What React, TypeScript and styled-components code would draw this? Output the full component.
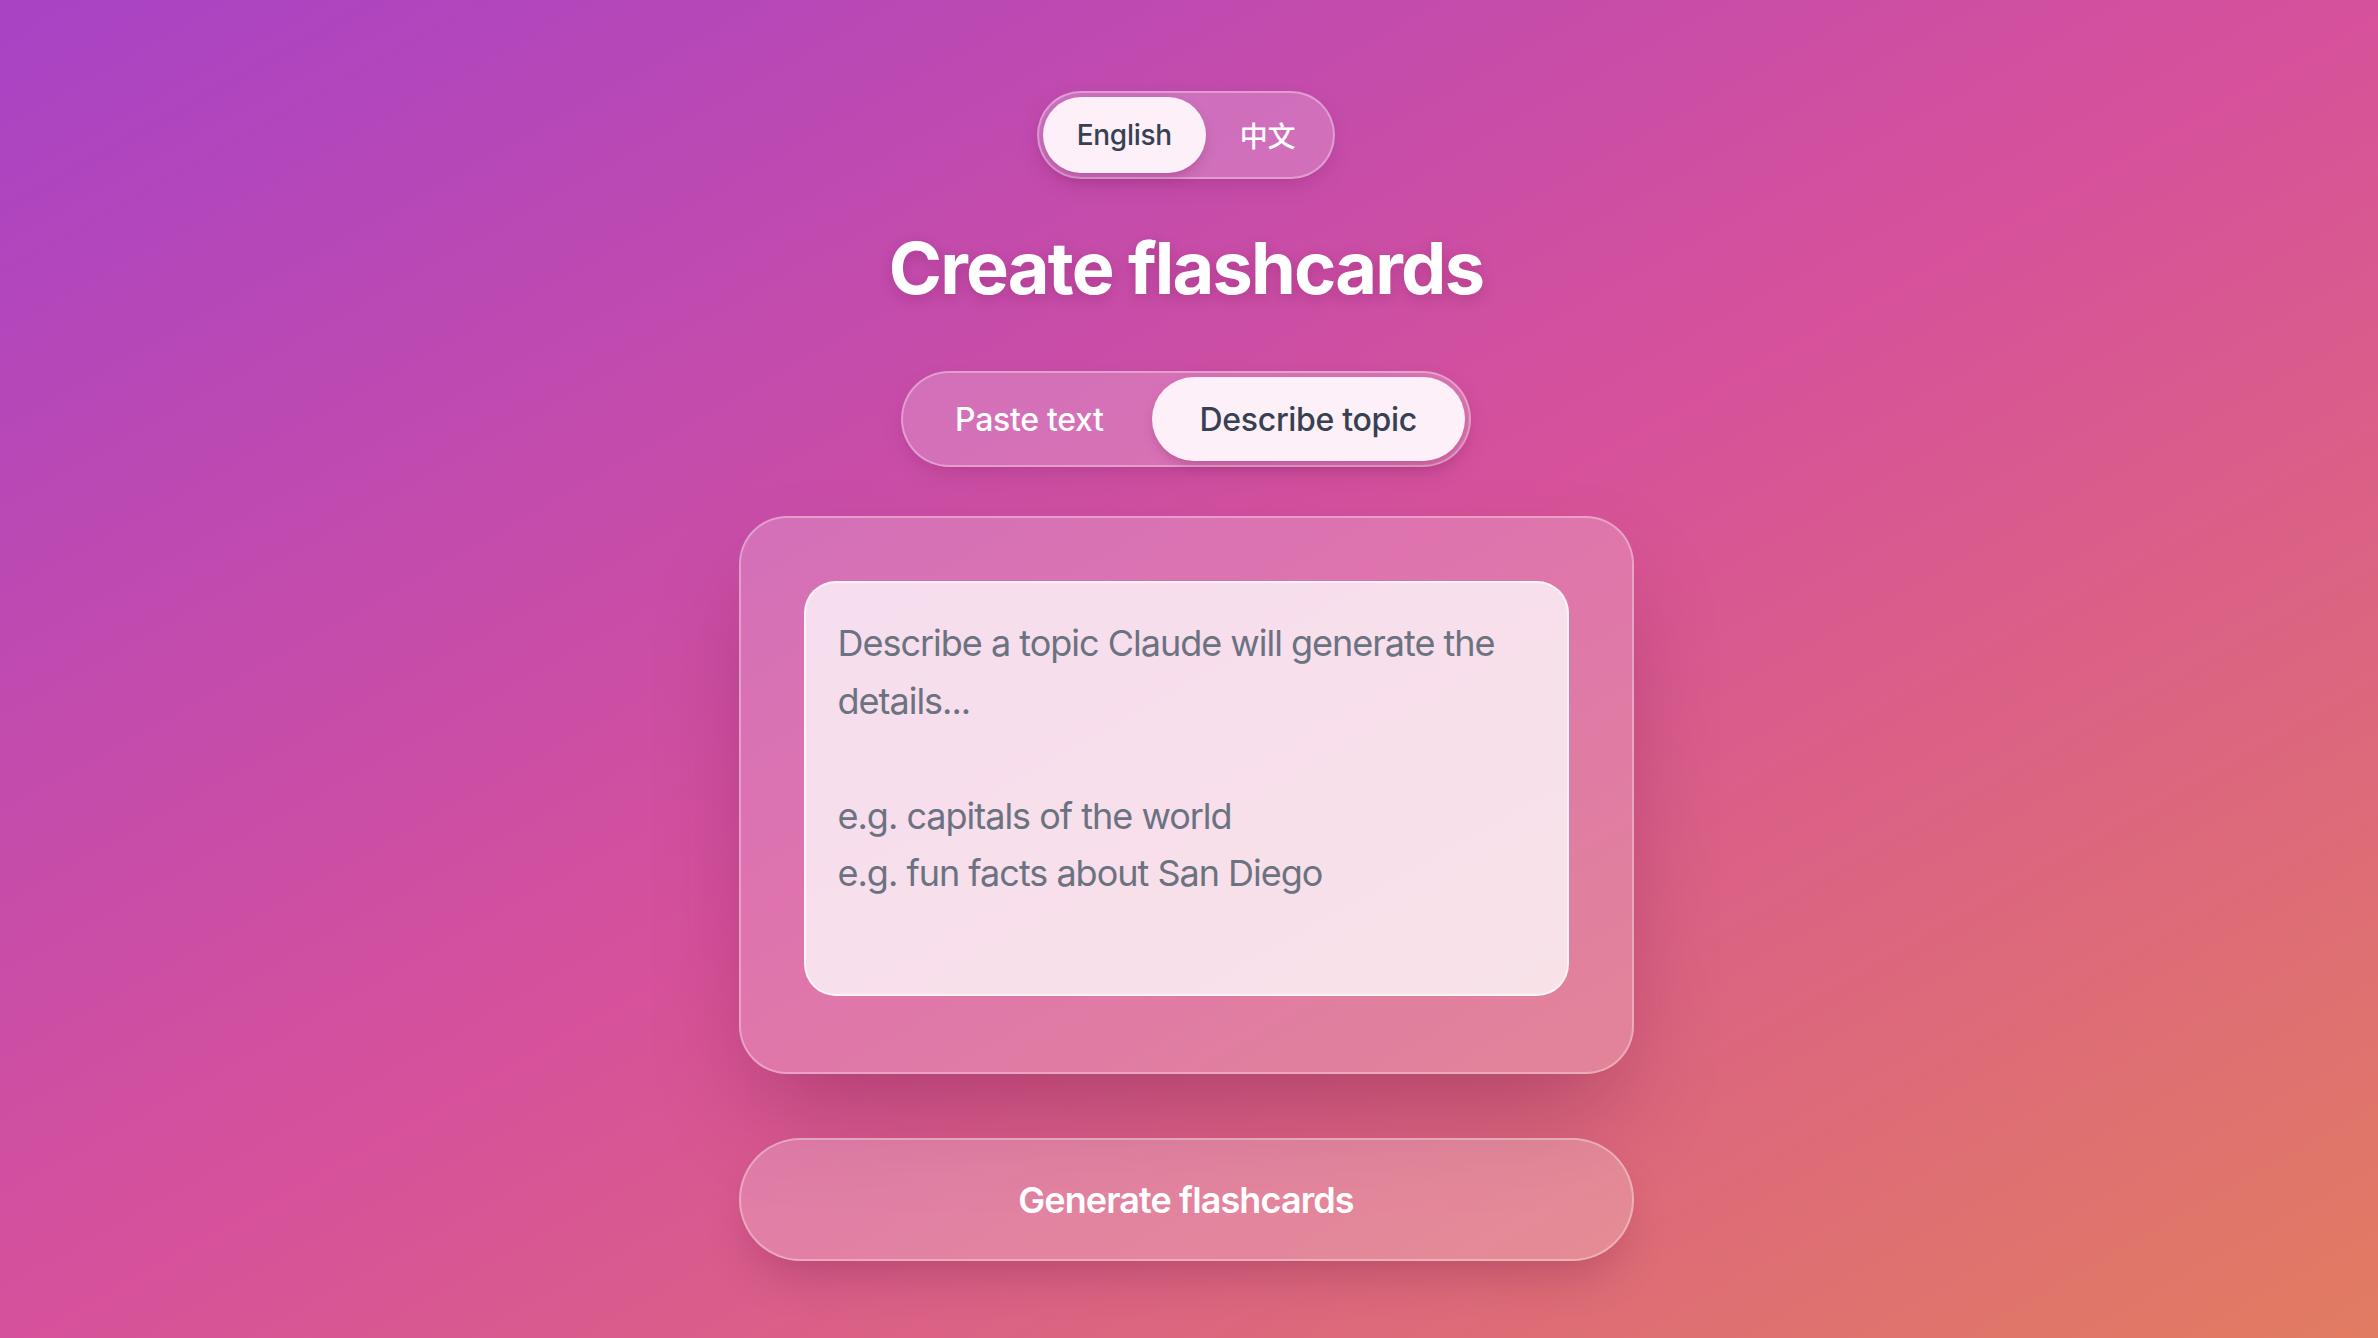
import React, { useState } from "react";
import styled, { createGlobalStyle } from "styled-components";

const GlobalStyle = createGlobalStyle`
  html, body {
    margin: 0;
    padding: 0;
  }
  body {
    font-family: Inter, "Noto Sans", "Noto Sans CJK SC", sans-serif;
    -webkit-font-smoothing: antialiased;
  }
  * { box-sizing: border-box; }
`;

const Page = styled.main`
  min-height: 100vh;
  display: flex;
  flex-direction: column;
  align-items: center;
  padding: 91px 6px 0 0;
  background: linear-gradient(to bottom right, #a843c5 0%, #d6519b 50%, #e27c61 100%);
`;

const Segmented = styled.div<{ $gapBelow: number }>`
  display: inline-flex;
  padding: 4px;
  border: 2px solid rgba(255, 255, 255, 0.32);
  border-radius: 9999px;
  background: rgba(255, 255, 255, 0.2);
  box-shadow: 0 8px 24px -8px rgba(80, 0, 60, 0.25);
  margin-bottom: ${(p) => p.$gapBelow}px;
`;

const Pill = styled.button<{ $active: boolean; $size: "sm" | "md" }>`
  border: none;
  cursor: pointer;
  border-radius: 9999px;
  font-family: Inter, "Noto Sans CJK SC", sans-serif;
  font-weight: 500;
  height: ${(p) => (p.$size === "sm" ? 76 : 84)}px;
  padding: 0 ${(p) => (p.$size === "sm" ? 34 : 48)}px;
  font-size: ${(p) => (p.$size === "sm" ? 28 : 32)}px;
  letter-spacing: -0.01em;
  color: ${(p) => (p.$active ? "#374151" : "#ffffff")};
  background: ${(p) => (p.$active ? "rgba(255, 247, 252, 0.95)" : "transparent")};
  box-shadow: ${(p) => (p.$active ? "0 6px 14px -4px rgba(90, 0, 60, 0.3)" : "none")};
`;

const Title = styled.h1`
  margin: 0 0 63px;
  font-size: 72px;
  line-height: 80px;
  font-weight: 700;
  letter-spacing: -0.025em;
  color: #ffffff;
  text-shadow: 0 4px 14px rgba(90, 0, 60, 0.22);
`;

const Card = styled.section`
  width: 895px;
  margin-top: 49px;
  padding: 63px 63px 76px;
  border: 2px solid rgba(255, 255, 255, 0.32);
  border-radius: 48px;
  background: rgba(255, 255, 255, 0.2);
  box-shadow: 0 50px 100px -24px rgba(90, 10, 50, 0.35);
`;

const TopicInput = styled.textarea`
  display: block;
  width: 100%;
  height: 415px;
  padding: 32px;
  border: 2px solid rgba(255, 255, 255, 0.65);
  border-radius: 32px;
  background: rgba(255, 255, 255, 0.77);
  font-family: Inter, "Noto Sans", sans-serif;
  font-size: 36px;
  line-height: 1.6;
  letter-spacing: -0.028em;
  color: #374151;
  resize: none;
  outline: none;
  &::placeholder {
    color: #6b7280;
    opacity: 1;
  }
`;

const GenerateButton = styled.button`
  width: 895px;
  height: 123px;
  margin-top: 64px;
  border: 2px solid rgba(255, 255, 255, 0.32);
  border-radius: 9999px;
  background: rgba(255, 255, 255, 0.22);
  color: #ffffff;
  font-family: Inter, "Noto Sans", sans-serif;
  font-size: 36px;
  font-weight: 600;
  letter-spacing: -0.025em;
  cursor: pointer;
  box-shadow: 0 24px 48px -16px rgba(90, 10, 50, 0.3);
`;

export default function App() {
  const [lang, setLang] = useState<"en" | "zh">("en");
  const [mode, setMode] = useState<"paste" | "topic">("topic");
  const [text, setText] = useState("");

  return (
    <>
      <GlobalStyle />
      <Page>
        <Segmented $gapBelow={49}>
          <Pill $size="sm" $active={lang === "en"} onClick={() => setLang("en")}>
            English
          </Pill>
          <Pill $size="sm" $active={lang === "zh"} onClick={() => setLang("zh")}>
            中文
          </Pill>
        </Segmented>
        <Title>Create flashcards</Title>
        <Segmented $gapBelow={0}>
          <Pill $size="md" $active={mode === "paste"} onClick={() => setMode("paste")}>
            Paste text
          </Pill>
          <Pill $size="md" $active={mode === "topic"} onClick={() => setMode("topic")}>
            Describe topic
          </Pill>
        </Segmented>
        <Card>
          <TopicInput
            value={text}
            onChange={(e) => setText(e.target.value)}
            placeholder={
              "Describe a topic Claude will generate the details...\n\ne.g. capitals of the world\ne.g. fun facts about San Diego"
            }
          />
        </Card>
        <GenerateButton>Generate flashcards</GenerateButton>
      </Page>
    </>
  );
}
